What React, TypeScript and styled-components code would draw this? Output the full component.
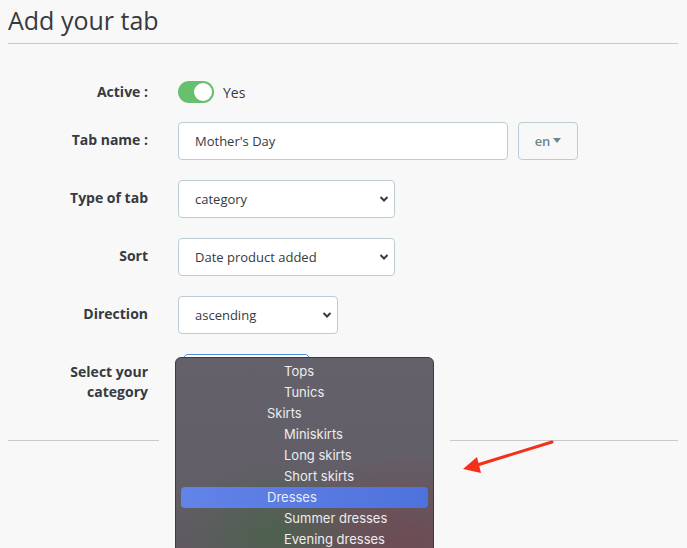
import * as React from 'react'
import styled, {createGlobalStyle} from 'styled-components'

const GlobalStyle = createGlobalStyle`
  html, body {
    margin: 0;
    padding: 0;
    background: #f8f8f8;
    overflow: hidden;
  }
  body {
    font-family: "Open Sans", "Liberation Sans", sans-serif;
    color: #363a41;
  }
`

const Page = styled.div`
  position: relative;
  height: 548px;
  padding: 0 9px 0 8px;
  overflow: hidden;
`

const Header = styled.h1`
  margin: 0;
  padding: 3px 0 6px;
  font-size: 25px;
  line-height: 34px;
  font-weight: 400;
  color: #363a41;
  border-bottom: 1px solid #c7cbce;
`

const Form = styled.div`
  display: grid;
  grid-template-columns: 170px 1fr;
  row-gap: 20px;
  margin-top: 37px;
`

interface ILabelProps {
  center?: boolean
}

const Label = styled.div<ILabelProps>`
  padding-right: 30px;
  padding-top: ${(props) => (props.center ? '0' : '8px')};
  text-align: right;
  font-size: 14px;
  line-height: 20px;
  font-weight: 700;
  align-self: ${(props) => (props.center ? 'center' : 'start')};
`

const Control = styled.div`
  position: relative;
  display: flex;
  align-items: center;
  gap: 10px;
`

const ToggleRow = styled(Control)`
  height: 22px;
  margin-bottom: -1px;
`

const Switch = styled.span`
  display: inline-flex;
  justify-content: flex-end;
  align-items: center;
  width: 36px;
  height: 22px;
  padding: 2px;
  box-sizing: border-box;
  border-radius: 11px;
  background: #68bf6d;
`

const Knob = styled.span`
  width: 18px;
  height: 18px;
  border-radius: 50%;
  background: #fff;
`

const ToggleText = styled.span`
  font-size: 14px;
  margin-left: -1px;
`

interface IFieldProps {
  width: number
}

const TextInput = styled.div<IFieldProps>`
  display: flex;
  align-items: center;
  width: ${(props) => props.width}px;
  height: 38px;
  box-sizing: border-box;
  padding: 0 16px;
  background: #fff;
  border: 1px solid #bbcdd2;
  border-radius: 4px;
  font-size: 13px;
`

const SelectBox = styled(TextInput)`
  justify-content: space-between;
  padding-right: 5px;
`

const LangButton = styled.div`
  display: flex;
  align-items: center;
  justify-content: center;
  gap: 3px;
  width: 60px;
  height: 38px;
  box-sizing: border-box;
  border: 1px solid #bbcdd2;
  border-radius: 4px;
  color: #6c868e;
  font-size: 13px;
  font-weight: 600;
`

const Caret = styled.span`
  width: 0;
  height: 0;
  border-left: 4.5px solid transparent;
  border-right: 4.5px solid transparent;
  border-top: 5px solid #6c868e;
  margin-top: -2px;
`

const FocusedSelect = styled.div`
  width: 127px;
  height: 38px;
  margin-left: 5px;
  box-sizing: border-box;
  border: 1px solid #4f90e0;
  border-radius: 5px;
  background: #fff;
  align-self: flex-start;
`

const Popup = styled.div`
  position: absolute;
  left: -3px;
  top: 3px;
  width: 259px;
  height: 210px;
  box-sizing: border-box;
  padding: 3px 5px;
  border: 1px solid #3b3a3e;
  border-radius: 6px;
  background:
    radial-gradient(ellipse 90px 70px at 95px 175px, rgba(70, 100, 70, 0.7), transparent),
    radial-gradient(ellipse 140px 90px at 230px 185px, rgba(115, 70, 78, 0.7), transparent),
    linear-gradient(180deg, #65616a 0%, #625e67 60%, #5e585f 100%);
  box-shadow: -16px 0 0 #f8f8f8, 16px 0 0 #f8f8f8;
  font-family: Inter, "Liberation Sans", sans-serif;
  z-index: 2;
`

interface IOptionProps {
  level: number
  selected?: boolean
}

const Option = styled.div<IOptionProps>`
  height: 21px;
  line-height: 21px;
  padding-left: ${(props) => (props.level === 0 ? 86 : 103)}px;
  font-size: 13px;
  color: #ededee;
  border-radius: 4px;
  background: ${(props) =>
    props.selected ? 'linear-gradient(90deg, #6283e8, #4e72dc)' : 'transparent'};
`

const Separator = styled.div`
  margin-top: 38px;
  border-top: 1px solid #c7c9cb;
`

const Arrow = styled.svg`
  position: absolute;
  left: 458px;
  top: 436px;
`

const Chevron = () => (
  <svg width="10" height="8" viewBox="0 0 10 8">
    <path d="M1.5 2 L5 5.5 L8.5 2" fill="none" stroke="#363a41" strokeWidth="2" />
  </svg>
)

const categories: {name: string; level: number; selected?: boolean}[] = [
  {name: 'Tops', level: 1},
  {name: 'Tunics', level: 1},
  {name: 'Skirts', level: 0},
  {name: 'Miniskirts', level: 1},
  {name: 'Long skirts', level: 1},
  {name: 'Short skirts', level: 1},
  {name: 'Dresses', level: 0, selected: true},
  {name: 'Summer dresses', level: 1},
  {name: 'Evening dresses', level: 1},
]

export default function App() {
  return (
    <Page>
      <GlobalStyle />
      <Header>Add your tab</Header>
      <Form>
        <Label center>Active :</Label>
        <ToggleRow>
          <Switch>
            <Knob />
          </Switch>
          <ToggleText>Yes</ToggleText>
        </ToggleRow>

        <Label>Tab name :</Label>
        <Control>
          <TextInput width={330}>Mother's Day</TextInput>
          <LangButton>
            en <Caret />
          </LangButton>
        </Control>

        <Label>Type of tab</Label>
        <Control>
          <SelectBox width={217}>
            category <Chevron />
          </SelectBox>
        </Control>

        <Label>Sort</Label>
        <Control>
          <SelectBox width={217}>
            Date product added <Chevron />
          </SelectBox>
        </Control>

        <Label>Direction</Label>
        <Control>
          <SelectBox width={160}>
            ascending <Chevron />
          </SelectBox>
        </Control>

        <Label>
          Select your
          <br />
          category
        </Label>
        <Control>
          <FocusedSelect />
          <Popup>
            {categories.map((cat, index) => (
              <Option key={`cat_${index}`} level={cat.level} selected={cat.selected}>
                {cat.name}
              </Option>
            ))}
          </Popup>
        </Control>
      </Form>
      <Separator />
      <Arrow width="100" height="40" viewBox="0 0 100 40">
        <line x1="94" y1="6" x2="16" y2="30" stroke="#f4301b" strokeWidth="3" strokeLinecap="round" />
        <polygon points="5,33 19,21 23,37" fill="#f4301b" />
      </Arrow>
    </Page>
  )
}
